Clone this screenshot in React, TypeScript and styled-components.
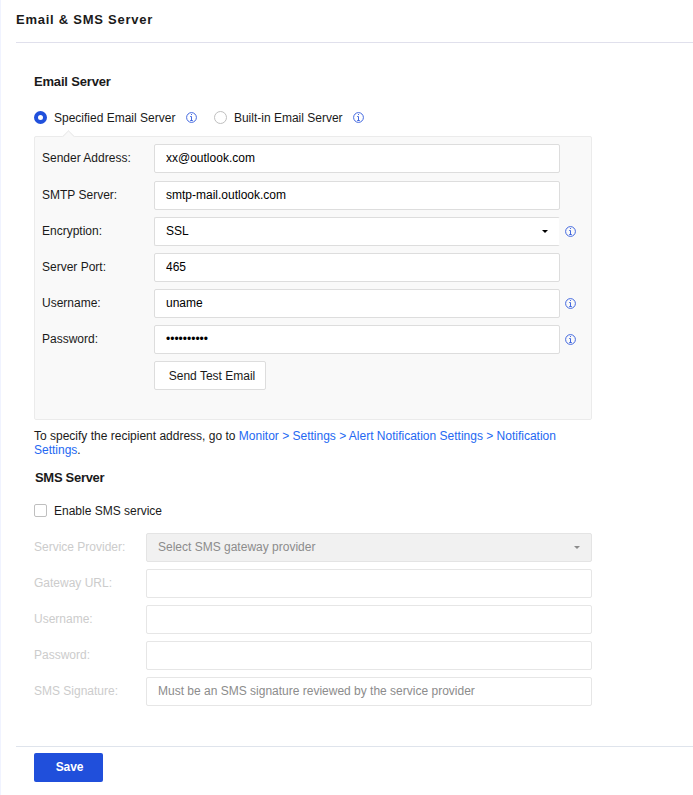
import React, { useState } from 'react';
import styled, { createGlobalStyle } from 'styled-components';

const GlobalStyle = createGlobalStyle`
  * {
    box-sizing: border-box;
  }

  body {
    margin: 0;
    background: #fff;
    color: #1a1a1a;
    font-family: "Liberation Sans", Arial, sans-serif;
    font-size: 12px;
    line-height: 14px;
  }

  input, button {
    font-family: inherit;
    font-size: inherit;
    letter-spacing: inherit;
  }
`

const InfoIcon: React.FC = () => (
  <Info viewBox="0 0 11 11">
    <circle cx="5.5" cy="5.5" r="4.9" />
    <path d="M4.2 4.5h1.3v4M4.2 8.5h2.6M5 2.5h1" />
  </Info>
)

interface FieldProps {
  label: string,
  type?: string,
  value?: string,
  placeholder?: string,
  select?: boolean,
  info?: boolean,
  disabled?: boolean
}

const Field: React.FC<FieldProps> = (props) => {
  const { label, type, value, placeholder, select, info, disabled } = props

  return (
    <Row>
      <Label $disabled={disabled}>{label}:</Label>
      {select ? (
        <Select $disabled={disabled}>
          {value || placeholder}
          <Caret viewBox="0 0 6 3"><path d="M0 0h6L3 3z" /></Caret>
        </Select>
      ) : (
        <Input
          type={type || 'text'}
          defaultValue={value}
          placeholder={placeholder}
          disabled={disabled}
        />
      )}
      {info && <InfoIcon />}
    </Row>
  )
}

const App: React.FC = () => {
  const [server, setServer] = useState('specified')
  const [sms, setSms] = useState(false)

  return (
    <Page>
      <GlobalStyle />
      <Title>Email &amp; SMS Server</Title>
      <Content>
        <Heading>Email Server</Heading>
        <Options>
          <Option>
            <Radio checked={server === 'specified'} onChange={() => setServer('specified')} />
            Specified Email Server
            <InfoIcon />
          </Option>
          <Option>
            <Radio checked={server === 'builtin'} onChange={() => setServer('builtin')} />
            Built-in Email Server
            <InfoIcon />
          </Option>
        </Options>
        <Panel>
          <Field label="Sender Address" value="xx@outlook.com" />
          <Field label="SMTP Server" value="smtp-mail.outlook.com" />
          <Field label="Encryption" value="SSL" select info />
          <Field label="Server Port" value="465" />
          <Field label="Username" value="uname" info />
          <Field label="Password" type="password" value="secret1234" info />
          <TestButton>Send Test Email</TestButton>
        </Panel>
        <Note>
          To specify the recipient address, go to <Link>Monitor &gt; Settings &gt; Alert Notification Settings &gt; Notification Settings</Link>.
        </Note>
        <SmsHeading>SMS Server</SmsHeading>
        <CheckLabel>
          <Checkbox checked={sms} onChange={() => setSms(!sms)} />
          Enable SMS service
        </CheckLabel>
        <SmsForm>
          <Field label="Service Provider" placeholder="Select SMS gateway provider" select disabled={!sms} />
          <Field label="Gateway URL" disabled={!sms} />
          <Field label="Username" disabled={!sms} />
          <Field label="Password" type="password" disabled={!sms} />
          <Field label="SMS Signature" placeholder="Must be an SMS signature reviewed by the service provider" disabled={!sms} />
        </SmsForm>
      </Content>
      <Footer>
        <SaveButton>Save</SaveButton>
      </Footer>
    </Page>
  )
}

export default App;


const Page = styled.div`
  height: 795px;
  padding-left: 15px;
  border-left: 1px solid #f0f3ff;
  overflow: hidden;
`

const Title = styled.h1`
  height: 43px;
  margin: 0;
  padding-top: 12px;
  border-bottom: 1px solid #e0e0ec;
  font-size: 13px;
  line-height: 16px;
  letter-spacing: 0.75px;
`

const Content = styled.div`
  width: 576px;
  height: 703px;
  padding: 31px 0 0 18px;
`

const Heading = styled.h2`
  margin: 0;
  font-size: 13px;
  line-height: 16px;
  letter-spacing: -0.18px;
`

const SmsHeading = styled(Heading)`
  margin: 13px 0 -1px;
  padding-left: 1px;
  letter-spacing: -0.3px;
`

const Options = styled.div`
  display: flex;
  gap: 17px;
  margin-top: 20px;
  height: 15px;
`

const Option = styled.label`
  display: flex;
  align-items: center;
  white-space: nowrap;
`

const Radio = styled.input.attrs({ type: 'radio' })`
  appearance: none;
  width: 13px;
  height: 13px;
  margin: 0 7px 0 0;
  border: 1px solid #bfbfbf;
  border-radius: 50%;

  &:checked {
    border: 4px solid #2050dc;
  }
`

const Info = styled.svg`
  flex: none;
  width: 11px;
  height: 11px;
  margin-bottom: 1px;
  fill: none;
  stroke: #3059dc;
  stroke-width: 0.9;

  ${Option} & {
    margin-left: 10.5px;
  }
`

const Panel = styled.div`
  position: relative;
  height: 284px;
  margin-top: 11px;
  padding: 7px 0 0 7px;
  background: #f9f9f9;
  border: 1px solid #ebebeb;
  border-radius: 2px;

  &::before {
    content: "";
    position: absolute;
    top: -5px;
    left: 29px;
    width: 8px;
    height: 8px;
    background: #f9f9f9;
    border: solid #ebebeb;
    border-width: 1px 0 0 1px;
    transform: rotate(45deg);
  }
`

const Row = styled.div`
  display: flex;
  align-items: center;
  height: 29px;
  margin-bottom: 7px;

  ${Panel} &:first-child {
    margin-bottom: 8px;
  }

  ${Info} {
    margin-left: 5px;
  }
`

const Label = styled.label<{ $disabled?: boolean }>`
  flex: none;
  width: 112px;
  padding-bottom: 2px;
  color: ${p => p.$disabled ? '#ccc' : '#1a1a1a'};
`

const Input = styled.input`
  width: 406px;
  height: 29px;
  padding: 0 11px 1px;
  background: #fff;
  border: 1px solid #ddd;
  border-radius: 2px;
  color: #000;
  outline: none;

  &:focus {
    border-color: #2050dc;
  }
  &:disabled {
    border-color: #e6e6e6;
  }
  &::placeholder {
    color: #8c8c8c;
  }
`

const Select = styled.div<{ $disabled?: boolean }>`
  display: flex;
  align-items: center;
  justify-content: space-between;
  width: 406px;
  height: 29px;
  padding: 0 11px 1px;
  background: ${p => p.$disabled ? '#f1f1f1' : '#fff'};
  border: 1px solid ${p => p.$disabled ? '#e4e4e4' : '#ddd'};
  border-right-color: ${p => p.$disabled ? '#e4e4e4' : '#f9f9f9'};
  border-radius: 2px;
  color: ${p => p.$disabled ? '#8c8c8c' : '#000'};
`

const Caret = styled.svg`
  width: 6px;
  height: 3px;
  margin-top: 1px;
  fill: currentColor;
`

const TestButton = styled.button`
  display: block;
  width: 112px;
  height: 29px;
  margin-left: 112px;
  padding: 0 0 0 4px;
  background: #fff;
  border: 1px solid #ddd;
  border-radius: 2px;
  color: #1a1a1a;
`

const Note = styled.p`
  margin: 9px 0 0;
`

const Link = styled.a`
  color: #2468f2;
  cursor: pointer;
`

const CheckLabel = styled.label`
  display: flex;
  align-items: center;
  height: 15px;
  margin-top: 18px;
`

const Checkbox = styled.input.attrs({ type: 'checkbox' })`
  appearance: none;
  width: 13px;
  height: 13px;
  margin: 0 7px 0 0;
  border: 1px solid #bfbfbf;
  border-radius: 2px;

  &:checked {
    background: #2050dc;
    border-color: #2050dc;
  }
`

const SmsForm = styled.div`
  margin-top: 15px;

  ${Input}, ${Select} {
    width: 446px;
  }
`

const Footer = styled.div`
  padding: 6px 0 0 18px;
  border-top: 1px solid #dfe4ec;
`

const SaveButton = styled.button`
  width: 69px;
  height: 29px;
  padding: 0 0 1px 2px;
  background: #204fdb;
  border: none;
  border-radius: 2px;
  color: #fff;
  font-weight: bold;
  letter-spacing: -0.1px;
`
